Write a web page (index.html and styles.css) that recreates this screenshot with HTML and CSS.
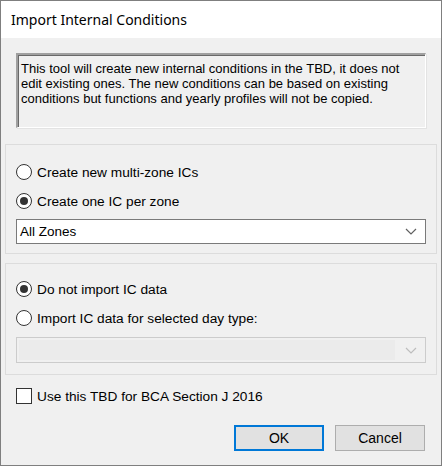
FILE: index.html
```html
<!DOCTYPE html>
<html>
<head>
<meta charset="utf-8">
<link rel="stylesheet" href="styles.css">
</head>
<body>
<div class="window">
  <div class="titlebar">Import Internal Conditions</div>
  <div class="content">
    <div class="infobox">This tool will create new internal conditions in the TBD, it does not edit existing ones. The new conditions can be based on existing conditions but functions and yearly profiles will not be copied.</div>

    <div class="group group-zones">
      <label class="option"><span class="radio"></span><span>Create new multi-zone ICs</span></label>
      <label class="option option-second"><span class="radio checked"></span><span>Create one IC per zone</span></label>
      <div class="combo">
        <span class="combo-text">All Zones</span>
        <svg class="chev" width="12" height="7" viewBox="0 0 12 7"><path d="M1 1 L6 6 L11 1" fill="none" stroke="#606060" stroke-width="1.2"/></svg>
      </div>
    </div>

    <div class="group group-import">
      <label class="option"><span class="radio checked"></span><span>Do not import IC data</span></label>
      <label class="option option-second"><span class="radio"></span><span>Import IC data for selected day type:</span></label>
      <div class="combo combo-disabled">
        <span class="combo-field"></span>
        <svg class="chev" width="12" height="7" viewBox="0 0 12 7"><path d="M1 1 L6 6 L11 1" fill="none" stroke="#bdbdbd" stroke-width="1.2"/></svg>
      </div>
    </div>

    <label class="option check-row"><span class="checkbox"></span><span>Use this TBD for BCA Section J 2016</span></label>

    <div class="buttons">
      <button class="btn btn-default">OK</button>
      <button class="btn">Cancel</button>
    </div>
  </div>
</div>
</body>
</html>
```

FILE: styles.css
```css
html, body {
  margin: 0;
  padding: 0;
}
body {
  width: 442px;
  height: 466px;
  font-family: "Liberation Sans", Arial, sans-serif;
  font-size: 13.7px;
  color: #000;
}
.window {
  box-sizing: border-box;
  width: 442px;
  height: 466px;
  border: 1px solid #7f7f7f;
  background: #f0f0f0;
  display: flex;
  flex-direction: column;
}
.titlebar {
  height: 37px;
  background: #fff;
  font-family: "Noto Sans", "Open Sans", sans-serif;
  font-size: 14px;
  line-height: 37px;
  padding-left: 10px;
  color: #000;
}
.content {
  flex: 1;
  display: flex;
  flex-direction: column;
  padding: 0 4px;
}
.infobox {
  box-sizing: border-box;
  margin: 15px 11px 0 11px;
  height: 75px;
  border-style: solid;
  border-width: 2px 1px 1px 2px;
  border-color: #a0a0a0 #ffffff #ffffff #a0a0a0;
  box-shadow: inset 1px 1px 0 #696969, 1px 1px 0 #e3e3e3;
  padding: 6px 3px 0 3px;
  font-size: 13px;
  line-height: 15px;
  color: #000;
}
.group {
  box-sizing: border-box;
  width: 432px;
  border: 1px solid #dcdcdc;
  padding: 0 10px;
  display: flex;
  flex-direction: column;
}
.group-zones {
  margin-top: 16px;
  padding-top: 17px;
  padding-bottom: 9px;
}
.group-import {
  margin-top: 9px;
  padding-top: 15px;
  padding-bottom: 11px;
}
.option {
  display: flex;
  align-items: center;
  height: 20px;
  gap: 5px;
  white-space: nowrap;
}
.option-second {
  margin-top: 9px;
}
.radio {
  box-sizing: border-box;
  width: 16px;
  height: 16px;
  border: 1px solid #333;
  border-radius: 50%;
  background: #fff;
  display: flex;
  align-items: center;
  justify-content: center;
  flex: none;
}
.radio.checked::after {
  content: "";
  width: 8px;
  height: 8px;
  border-radius: 50%;
  background: #333;
}
.combo {
  box-sizing: border-box;
  margin-top: 8px;
  height: 25px;
  border: 1px solid #7a7a7a;
  background: #fff;
  display: flex;
  align-items: center;
  padding: 0 8px 0 3px;
  font-size: 13.5px;
}
.combo-text {
  flex: 1;
}
.combo-disabled {
  margin-top: 9px;
  height: 26px;
  border-color: #cccccc;
  background: #f0f0f0;
  padding: 2px 8px 2px 2px;
  align-items: stretch;
}
.combo-disabled .combo-field {
  flex: 1;
  background: #ebebeb;
  margin-right: 10px;
}
.combo-disabled .chev {
  align-self: center;
}
.chev {
  flex: none;
}
.check-row {
  margin-top: 11px;
  padding-left: 11px;
}
.checkbox {
  box-sizing: border-box;
  width: 16px;
  height: 16px;
  border: 1px solid #333;
  background: #fff;
  flex: none;
}
.buttons {
  margin-top: 19px;
  display: flex;
  justify-content: flex-end;
  gap: 11px;
  padding-right: 12px;
}
.btn {
  box-sizing: border-box;
  width: 90px;
  height: 26px;
  border: 1px solid #adadad;
  background: #e1e1e1;
  font-family: "Liberation Sans", Arial, sans-serif;
  font-size: 14px;
  color: #000;
  padding: 0;
  margin: 0;
}
.btn-default {
  border: 1px solid #0078d7;
  box-shadow: inset 0 0 0 1px #0078d7;
}
```
